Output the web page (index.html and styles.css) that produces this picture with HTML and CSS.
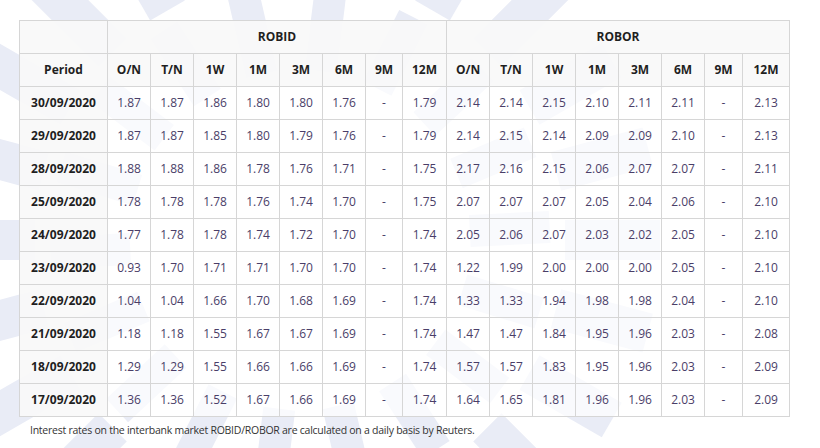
FILE: index.html
```html
<!DOCTYPE html>
<html lang="en">
<head>
<meta charset="utf-8">
<title>ROBID / ROBOR</title>
<link rel="stylesheet" href="styles.css">
</head>
<body>
<div class="watermark" aria-hidden="true">
  <svg width="820" height="448" viewBox="0 0 820 448">
    <g fill="#e9ecf6">
      <g transform="translate(300 240)">
        <rect x="-20" y="-360" width="40" height="95" transform="rotate(0)"/>
        <rect x="-20" y="-360" width="40" height="95" transform="rotate(15)"/>
        <rect x="-20" y="-360" width="40" height="95" transform="rotate(30)"/>
        <rect x="-20" y="-360" width="40" height="95" transform="rotate(45)"/>
        <rect x="-20" y="-360" width="40" height="95" transform="rotate(60)"/>
        <rect x="-20" y="-360" width="40" height="95" transform="rotate(75)"/>
        <rect x="-20" y="-360" width="40" height="95" transform="rotate(90)"/>
        <rect x="-20" y="-360" width="40" height="95" transform="rotate(105)"/>
        <rect x="-20" y="-360" width="40" height="95" transform="rotate(120)"/>
        <rect x="-20" y="-360" width="40" height="95" transform="rotate(135)"/>
        <rect x="-20" y="-360" width="40" height="95" transform="rotate(150)"/>
        <rect x="-20" y="-360" width="40" height="95" transform="rotate(165)"/>
        <rect x="-20" y="-360" width="40" height="95" transform="rotate(180)"/>
        <rect x="-20" y="-360" width="40" height="95" transform="rotate(195)"/>
        <rect x="-20" y="-360" width="40" height="95" transform="rotate(210)"/>
        <rect x="-20" y="-360" width="40" height="95" transform="rotate(225)"/>
        <rect x="-20" y="-360" width="40" height="95" transform="rotate(240)"/>
        <rect x="-20" y="-360" width="40" height="95" transform="rotate(255)"/>
        <rect x="-20" y="-360" width="40" height="95" transform="rotate(270)"/>
        <rect x="-20" y="-360" width="40" height="95" transform="rotate(285)"/>
        <rect x="-20" y="-360" width="40" height="95" transform="rotate(300)"/>
        <rect x="-20" y="-360" width="40" height="95" transform="rotate(315)"/>
        <rect x="-20" y="-360" width="40" height="95" transform="rotate(330)"/>
        <rect x="-20" y="-360" width="40" height="95" transform="rotate(345)"/>
        <rect x="-16" y="-250" width="32" height="80" transform="rotate(7)"/>
        <rect x="-16" y="-250" width="32" height="80" transform="rotate(27)"/>
        <rect x="-16" y="-250" width="32" height="80" transform="rotate(47)"/>
        <rect x="-16" y="-250" width="32" height="80" transform="rotate(67)"/>
        <rect x="-16" y="-250" width="32" height="80" transform="rotate(87)"/>
        <rect x="-16" y="-250" width="32" height="80" transform="rotate(107)"/>
        <rect x="-16" y="-250" width="32" height="80" transform="rotate(127)"/>
        <rect x="-16" y="-250" width="32" height="80" transform="rotate(147)"/>
        <rect x="-16" y="-250" width="32" height="80" transform="rotate(167)"/>
        <rect x="-16" y="-250" width="32" height="80" transform="rotate(187)"/>
        <rect x="-16" y="-250" width="32" height="80" transform="rotate(207)"/>
        <rect x="-16" y="-250" width="32" height="80" transform="rotate(227)"/>
        <rect x="-16" y="-250" width="32" height="80" transform="rotate(247)"/>
        <rect x="-16" y="-250" width="32" height="80" transform="rotate(267)"/>
        <rect x="-16" y="-250" width="32" height="80" transform="rotate(287)"/>
        <rect x="-16" y="-250" width="32" height="80" transform="rotate(307)"/>
        <rect x="-16" y="-250" width="32" height="80" transform="rotate(327)"/>
        <rect x="-16" y="-250" width="32" height="80" transform="rotate(347)"/>
      </g>
    </g>
  </svg>
</div>

<main class="page">
  <table class="rates">
    <colgroup>
      <col class="c-period">
      <col class="c-n"><col class="c-n"><col class="c-n"><col class="c-n"><col class="c-n"><col class="c-n"><col class="c-9a"><col class="c-12a">
      <col class="c-n"><col class="c-n"><col class="c-n"><col class="c-n"><col class="c-n"><col class="c-n"><col class="c-9b"><col class="c-12b">
    </colgroup>
    <thead>
      <tr>
        <th class="corner"></th>
        <th colspan="8">ROBID</th>
        <th colspan="8">ROBOR</th>
      </tr>
      <tr>
        <th>Period</th>
        <th>O/N</th><th>T/N</th><th>1W</th><th>1M</th><th>3M</th><th>6M</th><th>9M</th><th>12M</th>
        <th>O/N</th><th>T/N</th><th>1W</th><th>1M</th><th>3M</th><th>6M</th><th>9M</th><th>12M</th>
      </tr>
    </thead>
    <tbody>
      <tr><th>30/09/2020</th><td>1.87</td><td>1.87</td><td>1.86</td><td>1.80</td><td>1.80</td><td>1.76</td><td>-</td><td>1.79</td><td>2.14</td><td>2.14</td><td>2.15</td><td>2.10</td><td>2.11</td><td>2.11</td><td>-</td><td>2.13</td></tr>
      <tr><th>29/09/2020</th><td>1.87</td><td>1.87</td><td>1.85</td><td>1.80</td><td>1.79</td><td>1.76</td><td>-</td><td>1.79</td><td>2.14</td><td>2.15</td><td>2.14</td><td>2.09</td><td>2.09</td><td>2.10</td><td>-</td><td>2.13</td></tr>
      <tr><th>28/09/2020</th><td>1.88</td><td>1.88</td><td>1.86</td><td>1.78</td><td>1.76</td><td>1.71</td><td>-</td><td>1.75</td><td>2.17</td><td>2.16</td><td>2.15</td><td>2.06</td><td>2.07</td><td>2.07</td><td>-</td><td>2.11</td></tr>
      <tr><th>25/09/2020</th><td>1.78</td><td>1.78</td><td>1.78</td><td>1.76</td><td>1.74</td><td>1.70</td><td>-</td><td>1.75</td><td>2.07</td><td>2.07</td><td>2.07</td><td>2.05</td><td>2.04</td><td>2.06</td><td>-</td><td>2.10</td></tr>
      <tr><th>24/09/2020</th><td>1.77</td><td>1.78</td><td>1.78</td><td>1.74</td><td>1.72</td><td>1.70</td><td>-</td><td>1.74</td><td>2.05</td><td>2.06</td><td>2.07</td><td>2.03</td><td>2.02</td><td>2.05</td><td>-</td><td>2.10</td></tr>
      <tr><th>23/09/2020</th><td>0.93</td><td>1.70</td><td>1.71</td><td>1.71</td><td>1.70</td><td>1.70</td><td>-</td><td>1.74</td><td>1.22</td><td>1.99</td><td>2.00</td><td>2.00</td><td>2.00</td><td>2.05</td><td>-</td><td>2.10</td></tr>
      <tr><th>22/09/2020</th><td>1.04</td><td>1.04</td><td>1.66</td><td>1.70</td><td>1.68</td><td>1.69</td><td>-</td><td>1.74</td><td>1.33</td><td>1.33</td><td>1.94</td><td>1.98</td><td>1.98</td><td>2.04</td><td>-</td><td>2.10</td></tr>
      <tr><th>21/09/2020</th><td>1.18</td><td>1.18</td><td>1.55</td><td>1.67</td><td>1.67</td><td>1.69</td><td>-</td><td>1.74</td><td>1.47</td><td>1.47</td><td>1.84</td><td>1.95</td><td>1.96</td><td>2.03</td><td>-</td><td>2.08</td></tr>
      <tr><th>18/09/2020</th><td>1.29</td><td>1.29</td><td>1.55</td><td>1.66</td><td>1.66</td><td>1.69</td><td>-</td><td>1.74</td><td>1.57</td><td>1.57</td><td>1.83</td><td>1.95</td><td>1.96</td><td>2.03</td><td>-</td><td>2.09</td></tr>
      <tr><th>17/09/2020</th><td>1.36</td><td>1.36</td><td>1.52</td><td>1.67</td><td>1.66</td><td>1.69</td><td>-</td><td>1.74</td><td>1.64</td><td>1.65</td><td>1.81</td><td>1.96</td><td>1.96</td><td>2.03</td><td>-</td><td>2.09</td></tr>
    </tbody>
  </table>
  <p class="note">Interest rates on the interbank market ROBID/ROBOR are calculated on a daily basis by Reuters.</p>
</main>
</body>
</html>
```
FILE: styles.css
```css
html, body {
  margin: 0;
  padding: 0;
  background: #ffffff;
}

body {
  position: relative;
  width: 820px;
  height: 448px;
  overflow: hidden;
  font-family: "Open Sans", "DejaVu Sans", sans-serif;
  color: #222222;
}

.watermark {
  position: absolute;
  left: 0;
  top: 0;
  z-index: 0;
}

.watermark svg {
  display: block;
}

.page {
  position: relative;
  z-index: 1;
  padding: 20px 0 0 19px;
}

.rates {
  border-collapse: collapse;
  table-layout: fixed;
  width: 771px;
  font-size: 12px;
}

.c-period { width: 88px; }
.c-n { width: 43px; }
.c-9a { width: 37px; }
.c-12a { width: 44px; }
.c-9b { width: 38px; }
.c-12b { width: 47px; }

.rates th,
.rates td {
  height: 32px;
  padding: 0;
  border: 1px solid #d6d6d6;
  text-align: center;
  vertical-align: middle;
  line-height: 16px;
  white-space: nowrap;
}

.rates th {
  font-weight: 700;
  color: #1f1f1f;
  background: rgba(249, 249, 249, 0.94);
}

.rates td {
  font-weight: 400;
  color: #4a3e68;
  background: rgba(255, 255, 255, 0.72);
}

.note {
  margin: 5px 0 0 11px;
  font-size: 10.5px;
  line-height: 16px;
  color: #333333;
  letter-spacing: -0.25px;
}
```
